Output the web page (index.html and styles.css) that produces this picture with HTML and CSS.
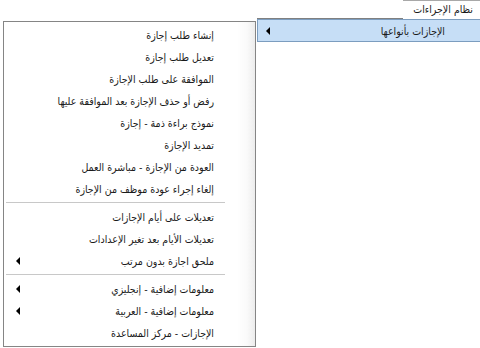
FILE: index.html
```html
<html dir="rtl">
<head>
  <meta charset="utf-8">
  <title>نظام الإجراءات</title>
  <link rel="stylesheet" href="styles.css">
</head>
<body>
  <div class="tabs">
    <div class="tab">نظام الإجراءات</div>
  </div>
  <div class="menus">
    <div class="topmenu">
      <div class="topitem"><span class="label">الإجازات بأنواعها</span><span class="arrow"></span></div>
    </div>
    <div class="submenu">
      <div class="item"><span class="label">إنشاء طلب إجازة</span></div>
      <div class="item"><span class="label">تعديل طلب إجازة</span></div>
      <div class="item"><span class="label">الموافقة على طلب الإجازة</span></div>
      <div class="item"><span class="label">رفض أو حذف الإجازة بعد الموافقة عليها</span></div>
      <div class="item"><span class="label">نموذج براءة ذمة - إجازة</span></div>
      <div class="item"><span class="label">تمديد الإجازة</span></div>
      <div class="item"><span class="label">العودة من الإجازة - مباشرة العمل</span></div>
      <div class="item"><span class="label">إلغاء إجراء عودة موظف من الإجازة</span></div>
      <div class="sep"></div>
      <div class="item"><span class="label">تعديلات على أيام الإجازات</span></div>
      <div class="item"><span class="label">تعديلات الأيام بعد تغير الإعدادات</span></div>
      <div class="item"><span class="label">ملحق اجازة بدون مرتب</span><span class="arrow"></span></div>
      <div class="sep"></div>
      <div class="item"><span class="label">معلومات إضافية - إنجليزي</span><span class="arrow"></span></div>
      <div class="item"><span class="label">معلومات إضافية - العربية</span><span class="arrow"></span></div>
      <div class="item"><span class="label">الإجازات - مركز المساعدة</span></div>
    </div>
  </div>
</body>
</html>
```

FILE: styles.css
```css
body {
  margin: 0;
  background-color: #fff;
  font-family: "DejaVu Sans Condensed", "DejaVu Sans", sans-serif;
  font-size: 10.5px;
  color: #1a1a1a;
}

.tabs {
  display: flex;
  height: 18px;
}

.tab {
  position: relative;
  z-index: 1;
  width: 77px;
  height: 19px;
  margin-bottom: -1px;
  box-sizing: border-box;
  padding-right: 7px;
  border-top: 1px solid #a8a8a8;
  background-color: #fff;
  line-height: 17px;
  white-space: nowrap;
}

.menus {
  display: flex;
  align-items: flex-start;
}

.topmenu {
  width: 223px;
  border-top: 1px solid #808080;
}

.topitem {
  display: flex;
  align-items: center;
  height: 23px;
  box-sizing: border-box;
  padding-right: 35px;
  padding-left: 8px;
  background-color: #c6def6;
  border: 1px solid #7c9dbf;
  border-right: none;
}

.label {
  flex: 1;
  white-space: nowrap;
}

.arrow {
  width: 0;
  height: 0;
  border-top: 4px solid transparent;
  border-bottom: 4px solid transparent;
  border-right: 4px solid #000;
}

.submenu {
  width: 253px;
  margin-top: 3px;
  margin-right: 1px;
  box-sizing: border-box;
  padding: 2px 0;
  border: 1px solid #858585;
  background: linear-gradient(to left, #ececec 0, #fafafa 8px, #fff 18px);
}

.item {
  display: flex;
  align-items: center;
  height: 22px;
  padding-right: 41px;
  padding-left: 12px;
}

.sep {
  height: 1px;
  margin: 2px 30px 3px 2px;
  background-color: #c8c8c8;
}
```
